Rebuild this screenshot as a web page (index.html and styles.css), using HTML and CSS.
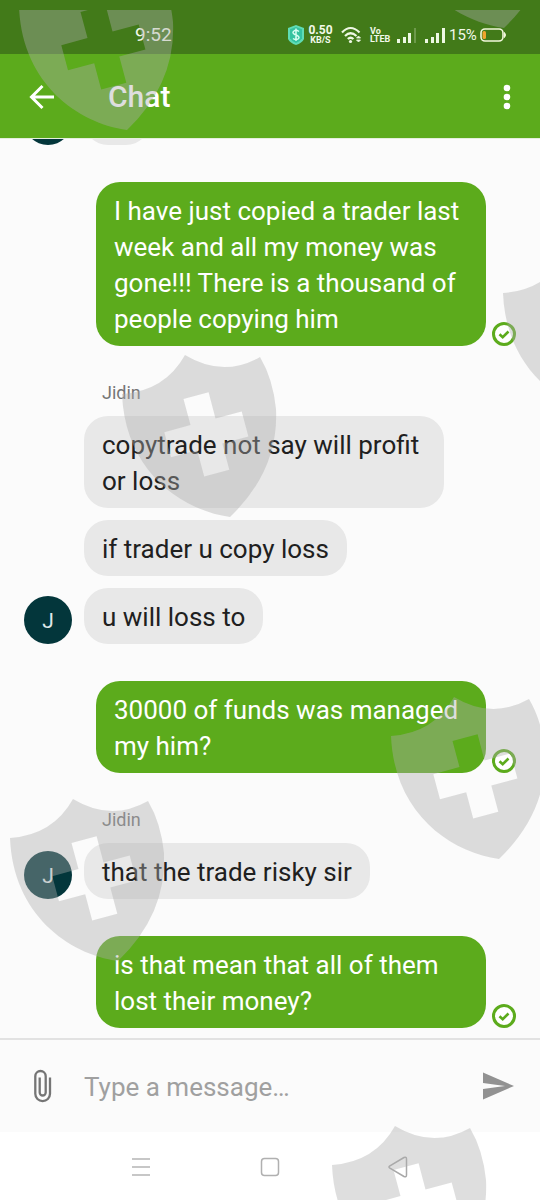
FILE: index.html
```html
<!DOCTYPE html>
<html lang="en">
<head>
<meta charset="utf-8">
<meta name="viewport" content="width=device-width, initial-scale=1">
<title>Chat</title>
<link rel="stylesheet" href="styles.css">
</head>
<body>
<div class="app">
  <div class="status-bar">
    <span class="clock">9:52</span>
    <div class="status-icons">
      <svg width="16" height="20" viewBox="0 0 16 20"><path d="M8 0l8 3v11q-2 4-8 6q-6-2-8-6V3z" fill="#5fdcb4"/><path d="M8 2l6 2.300v9q-1.500 3-6 4.700q-4.500-1.700-6-4.700v-9z" fill="#35c3a0"/><path d="M11 6.500Q8 4.500 6 6t0 3l4 2q2 1.500 0 3t-5-.500M8 3.500v12.500" fill="none" stroke="#d8fff2" stroke-width="1.500"/></svg>
      <span class="net-speed"><b>0.50</b><small>KB/S</small></span>
      <svg width="21" height="18" viewBox="0 0 21 18" fill="none" stroke="#eef8e4" stroke-width="2.200"><path d="M1 6.500Q9.500-2.500 18.500 6.500M4 10Q9.500 4.500 15.500 10M6.800 13Q9.500 10.500 12.500 13"/><circle cx="9.500" cy="15.500" r="1.600" fill="#eef8e4" stroke="none"/><path d="M15.500 12l2-2 2 2zM15.500 14l2 2 2-2z" fill="#eef8e4" stroke-width=".8"/></svg>
      <span class="volte"><span>Vo</span><span>LTEB</span></span>
      <svg width="20" height="16" viewBox="0 0 20 16" fill="#eef8e4"><path d="M0 12h3v4H0zM6 10h3v6H6zM11 6h3v10h-3z"/><path d="M17 1h2v15h-2z" opacity=".25"/></svg>
      <svg width="20" height="16" viewBox="0 0 20 16" fill="#eef8e4"><path d="M0 12h3v4H0zM6 10h3v6H6zM11 6h3v10h-3zM17 1h3v15h-3z"/></svg>
      <span class="percent">15%</span>
      <svg width="26" height="14" viewBox="0 0 26 14"><rect x="1" y="1" width="22" height="12" rx="4" fill="none" stroke="#f2f8dc" stroke-width="1.600"/><path d="M24.500 4.500q2 2.500 0 5z" fill="#f2f8dc" stroke="#f2f8dc"/><rect x="2.500" y="3" width="3.500" height="8" rx="1.500" fill="#f0a52c"/></svg>
    </div>
  </div>

  <header class="app-bar">
    <button class="icon-button" aria-label="Back"><svg width="36" height="36" viewBox="0 0 36 36" fill="none" stroke="#fff" stroke-width="3"><path d="M30 18H8M18.500 7L7.500 18l11 11"/></svg></button>
    <h1 class="title">Chat</h1>
    <button class="icon-button more" aria-label="More options"><svg width="8" height="26" viewBox="0 0 8 26" fill="#fff"><circle cx="4" cy="4" r="3.300"/><circle cx="4" cy="13" r="3.300"/><circle cx="4" cy="22" r="3.300"/></svg></button>
  </header>

  <main class="chat">
    <section class="received">
      <span class="avatar"></span>
      <div class="stack"><p class="bubble short"></p></div>
    </section>

    <section class="sent">
      <p class="bubble">I have just copied a trader last week and all my money was gone!!! There is a thousand of people copying him</p>
      <svg width="24" height="24" viewBox="0 0 24 24"><circle cx="12" cy="12" r="10.500" fill="#fff" stroke="#5cab1c" stroke-width="3"/><path d="M7.500 12.200l3.200 3 5.800-5.700" fill="none" stroke="#5cab1c" stroke-width="2.600"/></svg>
    </section>

    <section class="received">
      <span class="avatar">J</span>
      <div class="stack">
        <h2 class="sender">Jidin</h2>
        <p class="bubble">copytrade not say will profit or loss</p>
        <p class="bubble">if trader u copy loss</p>
        <p class="bubble">u will loss to</p>
      </div>
    </section>

    <section class="sent">
      <p class="bubble">30000 of funds was managed my him?</p>
      <svg width="24" height="24" viewBox="0 0 24 24"><circle cx="12" cy="12" r="10.500" fill="#fff" stroke="#5cab1c" stroke-width="3"/><path d="M7.500 12.200l3.200 3 5.800-5.700" fill="none" stroke="#5cab1c" stroke-width="2.600"/></svg>
    </section>

    <section class="received">
      <span class="avatar">J</span>
      <div class="stack">
        <h2 class="sender">Jidin</h2>
        <p class="bubble">that the trade risky sir</p>
      </div>
    </section>

    <section class="sent">
      <p class="bubble">is that mean that all of them lost their money?</p>
      <svg width="24" height="24" viewBox="0 0 24 24"><circle cx="12" cy="12" r="10.500" fill="#fff" stroke="#5cab1c" stroke-width="3"/><path d="M7.500 12.200l3.200 3 5.800-5.700" fill="none" stroke="#5cab1c" stroke-width="2.600"/></svg>
    </section>
  </main>

  <form class="composer">
    <button class="icon-button" type="button" aria-label="Attach a file"><svg width="36" height="36" viewBox="0 0 36 36" fill="none" stroke="#757575" stroke-width="2.300"><path d="M26 9.500v16.300a7.300 7.300 0 0 1-14.700 0V8.200a5.200 5.200 0 0 1 10.400 0v16.300a3 3 0 0 1-6 0V9.500"/></svg></button>
    <input class="message" type="text" placeholder="Type a message…" aria-label="Message">
    <button class="icon-button" type="submit" aria-label="Send"><svg width="36" height="36" viewBox="0 0 36 36" fill="#929292"><path d="M3 4.500L34 18 3 31.500V21l22-3-22-3z"/></svg></button>
  </form>

  <nav class="system-nav" aria-label="System">
    <button class="icon-button" aria-label="Recent apps"><svg width="20" height="22" viewBox="0 0 20 22" fill="none" stroke="#b5b5b5" stroke-width="1.400"><path d="M0 3h18M0 11h18M0 19h18"/></svg></button>
    <button class="icon-button" aria-label="Home"><svg width="20" height="22" viewBox="0 0 20 22" fill="none" stroke="#b0b0b0" stroke-width="1.500"><rect x="1.500" y="2.500" width="17" height="17" rx="3"/></svg></button>
    <button class="icon-button" aria-label="Back"><svg width="20" height="22" viewBox="0 0 20 22" fill="none" stroke="#a8a8a8" stroke-width="1.500" stroke-linejoin="round"><path d="M1.500 10.200Q.500 11 1.500 11.800L16 20.500q2.500 1 2.500-1.500V3q0-2.500-2.500-1.500z"/></svg></button>
  </nav>

  <svg class="watermark" viewBox="0 0 540 1200" preserveAspectRatio="xMidYMid slice" aria-hidden="true">
    <defs>
      <path id="shield" fill-rule="evenodd" d="M0 0Q38 23 75 2Q88 24 91 54Q94 115 45 162C-5 155-60 115-63 39Q-20 36 0 0Z M-1.500 44L23.600 37.300 30.500 63.400 56.700 56.400 63.400 81.500 37.300 88.500 44.300 114.700 19.200 121.400 12.200 95.300-14 102.300-20.700 77.200 5.500 70.100Z"/>
      <clipPath id="frame"><path d="M0 10h540v1190H0z"/></clipPath>
    </defs>
    <g clip-path="url(#frame)">
      <use href="#shield" x="82" y="-32"/>
      <use href="#shield" x="459" y="-134"/>
      <use href="#shield" x="566" y="254"/>
      <use href="#shield" x="185" y="355"/>
      <use href="#shield" x="454" y="697"/>
      <use href="#shield" x="73" y="799"/>
      <use href="#shield" x="395" y="1126"/>
    </g>
  </svg>
</div>
</body>
</html>
```
FILE: styles.css
```css
* { box-sizing: border-box; }

body {
  margin: 0;
  font-family: Roboto, "Liberation Sans", sans-serif;
  background: #fbfbfb;
}

.app {
  position: relative;
  display: flex;
  flex-direction: column;
  height: 100vh;
  overflow: hidden;
}

.app svg { display: block; flex: none; }

.icon-button {
  display: flex;
  align-items: center;
  justify-content: center;
  flex: none;
  padding: 0;
  border: 0;
  background: none;
}

.status-bar {
  display: flex;
  align-items: center;
  justify-content: space-between;
  flex: none;
  height: 54px;
  padding: 16px 34px 0 135px;
  background: #427a19;
  color: #f2f9ea;
}

.clock { font-size: 19px; line-height: 22px; }

.status-icons {
  display: flex;
  align-items: center;
  gap: 8px;
}

.net-speed {
  display: flex;
  flex-direction: column;
  align-items: center;
  width: 25px;
  margin-left: -4px;
  font-size: 12px;
  line-height: 10px;
}

.net-speed small { font-size: 9px; font-weight: 700; }

.volte {
  display: flex;
  flex-direction: column;
  width: 19px;
  font-size: 9px;
  font-weight: 700;
  line-height: 8px;
}

.percent {
  width: 27px;
  margin: 0 -4px;
  font-size: 15px;
  line-height: 20px;
}

.app-bar {
  display: flex;
  align-items: center;
  flex: none;
  height: 84px;
  padding: 2px 24px 0;
  background: #5cab1c;
  color: #fff;
}

.title {
  flex: 1;
  margin: 0 0 0 48px;
  font-size: 30px;
  font-weight: 500;
  line-height: 36px;
}

.more { width: 18px; }

.chat {
  display: flex;
  flex-direction: column;
  justify-content: flex-end;
  flex: 1;
  gap: 37px;
  min-height: 0;
  padding: 0 24px 10px;
  overflow: hidden;
  border-top: 1px solid #e4efdc;
}

.sent {
  display: flex;
  align-items: flex-end;
  gap: 6px;
  padding-left: 72px;
}

.sent .bubble {
  flex: 1;
  background: #5cab1c;
  color: #fff;
}

.received {
  display: flex;
  align-items: flex-end;
  gap: 12px;
}

.stack {
  display: flex;
  flex-direction: column;
  align-items: flex-start;
  gap: 12px;
  max-width: 360px;
}

.avatar {
  flex: none;
  width: 48px;
  height: 48px;
  border-radius: 50%;
  background: #03363b;
  color: #dfe8e8;
  font-size: 21px;
  line-height: 50px;
  text-align: center;
}

.sender {
  margin: 0 0 1px;
  padding-left: 18px;
  color: #757575;
  font-size: 18px;
  font-weight: 400;
  line-height: 20px;
}

.bubble {
  margin: 0;
  padding: 11px 18px 9px;
  border-radius: 24px;
  background: #e8e8e8;
  color: #202020;
  font-size: 26px;
  line-height: 36px;
}

.short {
  width: 66px;
  height: 56px;
}

.composer {
  display: flex;
  align-items: center;
  flex: none;
  height: 94px;
  padding: 0 24px;
  border-top: 2px solid #e2e2e2;
}

.message {
  flex: 1;
  min-width: 0;
  margin: 0 12px 0 24px;
  padding: 2px 0 0;
  border: 0;
  outline: 0;
  background: none;
  color: #202020;
  font: 26px/36px Roboto, "Liberation Sans", sans-serif;
}

.message::placeholder { color: #a0a0a0; opacity: 1; }

.system-nav {
  display: flex;
  align-items: center;
  justify-content: center;
  flex: none;
  gap: 108px;
  height: 68px;
  padding-top: 2px;
  background: #fff;
}

.watermark {
  position: absolute;
  inset: 0;
  width: 100%;
  height: 100%;
  fill: #adadad;
  fill-opacity: .4;
  pointer-events: none;
}
```
